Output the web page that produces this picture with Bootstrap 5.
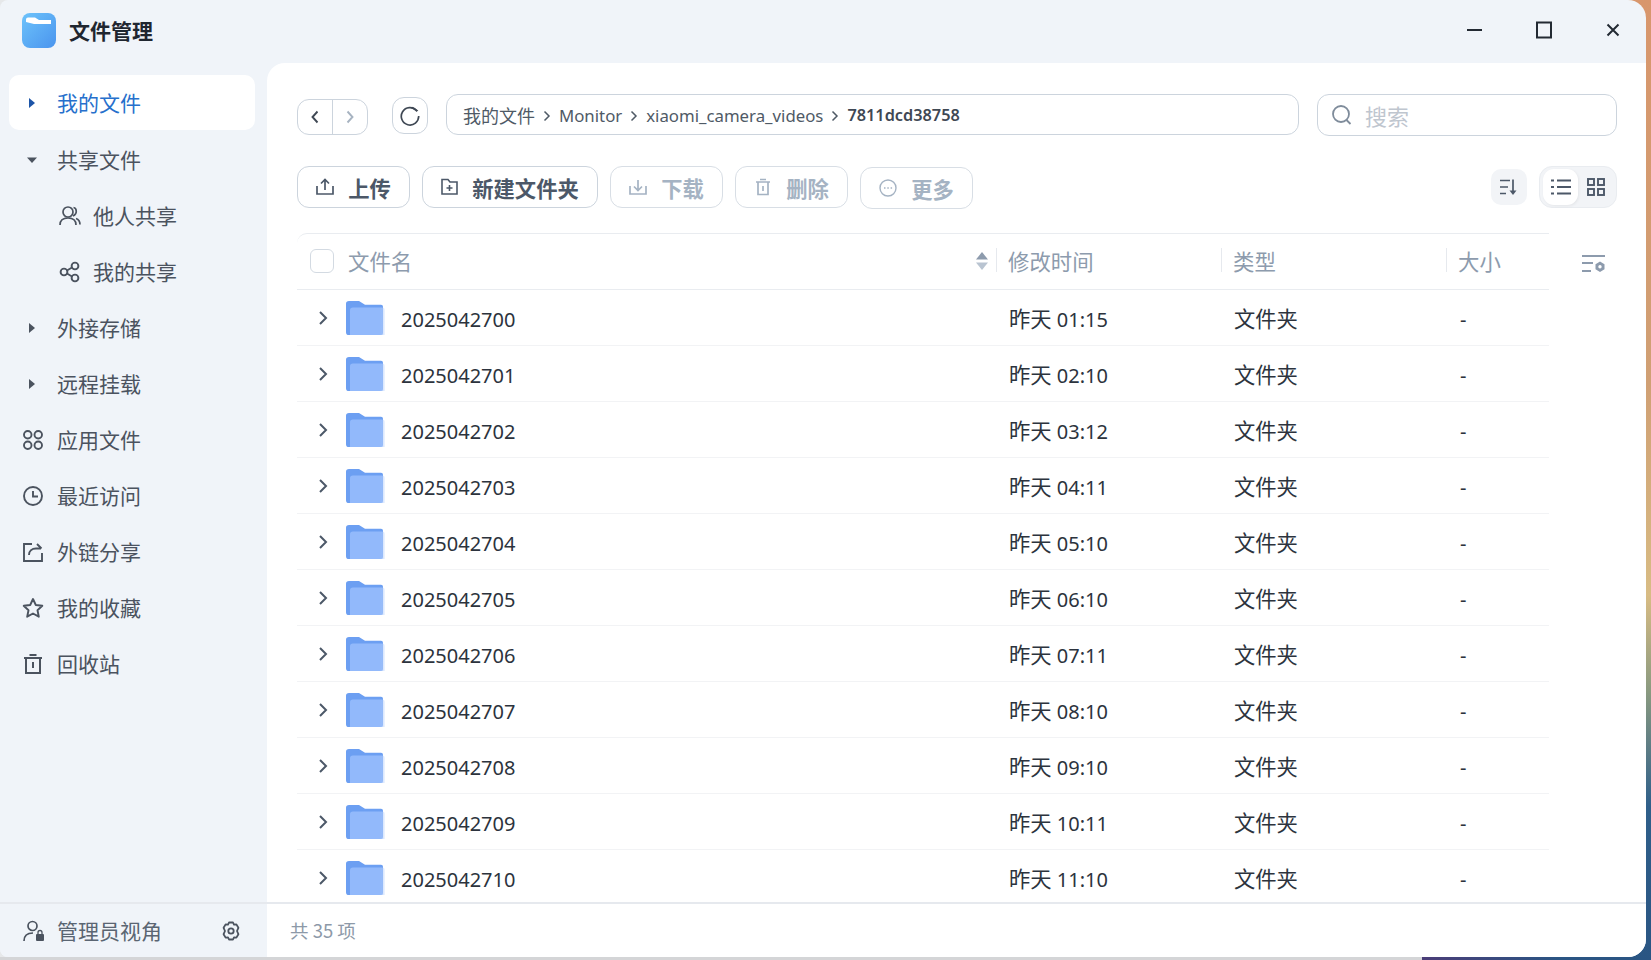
<!doctype html>
<html lang="zh">
<head>
<meta charset="utf-8">
<title>文件管理</title>
<link href="https://cdn.jsdelivr.net/npm/bootstrap@5.3.0/dist/css/bootstrap.min.css" rel="stylesheet">
<style>
html,body{height:960px;overflow:hidden}
body{font-family:"Noto Sans CJK SC","Noto Sans",sans-serif;color:#2c333d;
 background:linear-gradient(90deg,#e6e8ea 0,#e6e8ea 40px,transparent 40px),linear-gradient(180deg,#d8966c 0,#d0a074 40%,#d8bc84 62%,#8a9a80 72%,#2f5f8a 84%,#2a5583 100%)}
.shell{width:1646px;height:957px;background:#f0f4f9;border-radius:8px 18px 18px 8px;overflow:hidden}
.deskstrip{height:3px;background:linear-gradient(90deg,#d4d5d7 0,#d4d5d7 1422px,#4b3d78 1422px,#2a5583 1560px)}
.titlebar{height:63px;padding-left:22px}
.applogo{width:34px;height:35px;margin-top:-2px}
.apptitle{font-size:21px;font-weight:700;color:#1f2630;margin-left:13px;margin-top:-2px}
.winbtns{margin-bottom:8px}
.winbtn{width:69px;height:30px;background:none;border:0;padding:0 0 0 2px;color:#232a33}
.mainarea{height:839px}
.side{width:267px;padding:12px 12px 0 9px}
.sideitem{height:56px;font-size:21px;color:#4b535f;padding-left:14px;flex-shrink:0}
.sideitem.active{height:55px;background:#fff;border-radius:10px;color:#2670cc;margin-bottom:2px}
.sideitem.caretrow{padding-left:17px}
.sideitem.sub{padding-left:50px}
.sideicon{width:20px;margin-right:14px;flex-shrink:0}
.sub .sideicon{width:22px;margin-right:12px}
.sideicon.wide{width:22px;margin-left:-1px;margin-right:13px}
.caret-s{width:12px;margin-right:19px;flex-shrink:0}
.panel{background:#fff;border-top-left-radius:18px;flex:1 1 0;min-width:0;padding:31px 29px 0 30px;overflow:hidden}
.barbox{background:#fff;border:1px solid #ccd4dd}
.navpair{width:71px;height:36px;border-radius:12px;margin-top:5px}
.navpair>div{flex:1;height:100%}
.navpair>div:first-child{border-right:1px solid #ccd4dd}
.refreshb{width:36px;height:37px;border-radius:12px;margin:3px 18px 0 24px}
.crumbs{width:853px;height:41px;border-radius:12px;padding:2px 0 0 16px;font-size:16.8px;color:#4f5a66;font-family:"Noto Sans","Noto Sans CJK SC",sans-serif}
.crumbs .cjk{font-size:18px;font-family:"Noto Sans CJK SC",sans-serif}
.crumbs strong{font-weight:600;color:#3f4854;font-size:16.3px}
.crumbsep{margin:0 8px}
.searchb{width:300px;height:42px;border-radius:12px;margin-left:18px;padding-left:13px;color:#bfc6cf;font-size:22px}
.tools{margin-top:30px;height:42px}
.tbtn{height:42px;border:1px solid #ccd4dd;border-radius:12px;background:#fff;font-size:21.3px;font-weight:700;color:#4c5868;padding:2px 0 0;margin-right:12px;display:flex;align-items:center;justify-content:center}
.tbtn.off{color:#a5b3c3;border-color:#d8dee5}
.tbtn svg{margin-right:14px;margin-top:-2px}
.btn113{width:113px}
.btn176{width:176px}
.btnlow{margin-top:1px}
.sortb{width:36px;height:36px;border-radius:10px;background:#f2f4f7;margin:3px 12px 0 auto}
.viewseg{width:78px;height:42px;border-radius:13px;background:#f2f4f7;border:1px solid #e9ecf0;padding:2px 3px}
.viewseg>div{width:36px;height:36px;border-radius:11px}
.viewseg>div.on{background:#fff;box-shadow:1px 1px 3px rgba(0,0,0,.06)}
.tablewrap{margin-top:25px;width:1252px;position:relative}
.thead-row{height:57px;border-top:1px solid #e9ecf0;border-bottom:1px solid #e9ecf0;border-top-left-radius:10px;color:#8d9bad;font-size:21.4px}
.thead-row .nametitle{margin-left:1px}
.chk{width:24px;height:24px;border:1.5px solid #d3dae2;border-radius:6px;margin:0 13px;flex-shrink:0}
.colname{width:699px;flex-shrink:0}
.coltime,.coltype{width:225px;flex-shrink:0}
.colsize{flex:1}
.thead-row .coltime,.thead-row .coltype,.thead-row .colsize{padding-left:12px;position:relative}
.coldiv{position:absolute;left:0;top:3px;height:24px;width:1px;background:#e6e9ee}
.tsort{margin-right:8px}
.colgear{position:absolute;left:1285px;top:21px}
.frow{height:56px;border-bottom:1px solid #f2f3f5;font-size:20px;color:#2c333d;font-family:"Noto Sans","Noto Sans CJK SC",sans-serif}
.frow .cjk{font-size:21.3px;font-family:"Noto Sans CJK SC",sans-serif}
.frow .chev{width:13px;margin-left:20px;margin-right:16px;flex-shrink:0}
.frow .folder{width:39px;height:34px;margin-right:16px;flex-shrink:0}
.frow .coltime,.frow .coltype{padding:2px 0 0 13px}
.frow .colsize{padding:4px 0 0 14px}
.frow .colname{display:flex;align-items:center}
.frow .ftext{padding-top:5px}
.foot{height:55px;border-top:2px solid #e6e9ee;flex-shrink:0}
.footside{width:267px;padding-left:23px;font-size:21px;color:#5a6572;background:#f0f4f9}
.adminicon{margin-right:12px}
.footgear{margin-right:26px}
.footmain{flex:1;background:#fff;padding-left:23px;font-size:18.5px;color:#8d99a8}
</style>
</head>
<body>
<div class="shell d-flex flex-column">
  <div class="titlebar d-flex align-items-center">
    <svg class="applogo" viewBox="0 0 34 35"><defs><linearGradient id="lg" x1="0" y1="0" x2="1" y2="1"><stop offset="0" stop-color="#6dc3fb"/><stop offset="1" stop-color="#4a94ee"/></linearGradient></defs><rect width="34" height="35" rx="8" fill="url(#lg)"/><path d="M4 6.500a2 2 0 0 1 2-2h7l4 2.500h12v4H12L4 9z" fill="#fff"/></svg>
    <span class="apptitle">文件管理</span>
    <div class="winbtns ms-auto d-flex align-items-center">
      <button class="winbtn"><svg width="16" height="16" viewBox="0 0 16 16"><path d="M0 8h15" stroke="currentColor" stroke-width="2"/></svg></button>
      <button class="winbtn"><svg width="18" height="18" viewBox="0 0 18 18"><rect x="2" y="1.500" width="14" height="15" fill="none" stroke="currentColor" stroke-width="2"/></svg></button>
      <button class="winbtn"><svg width="14" height="14" viewBox="0 0 14 14"><path d="M1.500 1.500l11 11M12.500 1.500l-11 11" stroke="currentColor" stroke-width="2"/></svg></button>
    </div>
  </div>
  <div class="mainarea d-flex">
    <aside class="side d-flex flex-column">
      <div class="sideitem caretrow active d-flex align-items-center"><svg class="caret-s" viewBox="0 0 12 12" height="12"><path d="M3 1l6 5-6 5z" fill="#1d55a8"/></svg><span>我的文件</span></div>
      <div class="sideitem caretrow d-flex align-items-center"><svg class="caret-s" viewBox="0 0 12 12" height="12"><path d="M1 3.500h10l-5 5.500z" fill="#4b535f"/></svg><span>共享文件</span></div>
      <div class="sideitem sub d-flex align-items-center"><svg class="sideicon" viewBox="0 0 22 22" height="22"><g fill="none" stroke="#4b535f" stroke-width="1.700"><circle cx="9" cy="7" r="5"/><path d="M1 20c0-5 3.500-7 8-7s8 2 8 7M14.500 2.500c3 .5 4.500 6-.5 8.500M17 13.500c2.500 1 4 3 4 6"/></g></svg><span>他人共享</span></div>
      <div class="sideitem sub d-flex align-items-center"><svg class="sideicon" viewBox="0 0 22 22" height="22"><g fill="none" stroke="#4b535f" stroke-width="1.900"><circle cx="5" cy="11" r="3.400"/><circle cx="16" cy="5" r="3.400"/><circle cx="16" cy="17" r="3.400"/><path d="M8 9.500l5-3M8 12.500l5 3"/></g></svg><span>我的共享</span></div>
      <div class="sideitem caretrow d-flex align-items-center"><svg class="caret-s" viewBox="0 0 12 12" height="12"><path d="M3 1l6 5-6 5z" fill="#4b535f"/></svg><span>外接存储</span></div>
      <div class="sideitem caretrow d-flex align-items-center"><svg class="caret-s" viewBox="0 0 12 12" height="12"><path d="M3 1l6 5-6 5z" fill="#4b535f"/></svg><span>远程挂载</span></div>
      <div class="sideitem d-flex align-items-center"><svg class="sideicon" viewBox="0 0 20 20" height="20"><g fill="none" stroke="#4b535f" stroke-width="1.900"><rect x="1" y="1" width="7.500" height="7.500" rx="3.700"/><rect x="11.500" y="1" width="7.500" height="7.500" rx="3.700"/><rect x="1" y="11.500" width="7.500" height="7.500" rx="3.700"/><rect x="11.500" y="11.500" width="7.500" height="7.500" rx="3.700"/></g></svg><span>应用文件</span></div>
      <div class="sideitem d-flex align-items-center"><svg class="sideicon" viewBox="0 0 20 20" height="20"><g fill="none" stroke="#4b535f" stroke-width="1.900"><circle cx="10" cy="10" r="9"/><path d="M10 5v5.500h5"/></g></svg><span>最近访问</span></div>
      <div class="sideitem d-flex align-items-center"><svg class="sideicon" viewBox="0 0 20 20" height="20"><path d="M9 2H1v17h18v-8M6 13c0-4 3-6.500 7-6.500h5M14 2l4.500 4.500" fill="none" stroke="#4b535f" stroke-width="1.900"/></svg><span>外链分享</span></div>
      <div class="sideitem d-flex align-items-center"><svg class="sideicon wide" viewBox="0 0 22 22" height="22"><path d="M11 2l2.800 6 6.500.8-4.800 4.400 1.300 6.500L11 16.500l-5.800 3.200 1.300-6.500L1.700 8.800 8.200 8z" fill="none" stroke="#4b535f" stroke-width="1.900" stroke-linejoin="round"/></svg><span>我的收藏</span></div>
      <div class="sideitem d-flex align-items-center"><svg class="sideicon" viewBox="0 0 20 20" height="20"><path d="M1 4h18M6.500 1h7M3 4v15h14V4M10 8v6" fill="none" stroke="#4b535f" stroke-width="2"/></svg><span>回收站</span></div>
    </aside>
    <main class="panel d-flex flex-column">
      <div class="d-flex align-items-start">
        <div class="barbox navpair d-flex">
          <div class="d-flex align-items-center justify-content-center"><svg width="10" height="14" viewBox="0 0 10 14"><path d="M7.500 1.500l-5 5.500 5 5.500" fill="none" stroke="#3f4854" stroke-width="1.900"/></svg></div>
          <div class="d-flex align-items-center justify-content-center"><svg width="10" height="14" viewBox="0 0 10 14"><path d="M2.500 1.500l5 5.500-5 5.500" fill="none" stroke="#a7b3c1" stroke-width="1.900"/></svg></div>
        </div>
        <div class="barbox refreshb d-flex align-items-center justify-content-center"><svg width="20" height="20" viewBox="0 0 20 20"><path d="M16.500 4.500A8.700 8.700 0 1 0 18.700 10" fill="none" stroke="#3f4854" stroke-width="1.700"/><path d="M12 1.500l4.800 3-1 .7" fill="none" stroke="#3f4854" stroke-width="1.700"/></svg></div>
        <div class="barbox crumbs d-flex align-items-center"><span class="cjk">我的文件</span><svg class="crumbsep" width="8" height="12" viewBox="0 0 8 12"><path d="M1.500 1.500L6 6l-4.500 4.500" fill="none" stroke="#4f5a66" stroke-width="1.500"/></svg>Monitor<svg class="crumbsep" width="8" height="12" viewBox="0 0 8 12"><path d="M1.500 1.500L6 6l-4.500 4.500" fill="none" stroke="#4f5a66" stroke-width="1.500"/></svg>xiaomi_camera_videos<svg class="crumbsep" width="8" height="12" viewBox="0 0 8 12"><path d="M1.500 1.500L6 6l-4.500 4.500" fill="none" stroke="#4f5a66" stroke-width="1.500"/></svg><strong>7811dcd38758</strong></div>
        <div class="barbox searchb d-flex align-items-center"><svg width="22" height="22" viewBox="0 0 22 22" class="me-2"><circle cx="10" cy="10" r="8" fill="none" stroke="#7f8c9b" stroke-width="1.800"/><path d="M15.500 16l4 4" stroke="#7f8c9b" stroke-width="1.800"/></svg><span class="ms-1">搜索</span></div>
      </div>
      <div class="tools d-flex align-items-start">
        <button class="tbtn btn113"><svg width="18" height="18" viewBox="0 0 18 18"><path d="M1 8v8h16V8M9 12V2M5 5.500L9 1.500l4 4" fill="none" stroke="#4c5868" stroke-width="1.700"/></svg>上传</button>
        <button class="tbtn btn176"><svg width="17" height="18" viewBox="0 0 17 18"><path d="M1 16V1.500h6l2 2.500h7v12zM8.500 7v6M5.500 10h6" fill="none" stroke="#4c5868" stroke-width="1.600"/></svg>新建文件夹</button>
        <button class="tbtn off btn113"><svg width="18" height="18" viewBox="0 0 18 18"><path d="M1 8v8h16V8M9 2v10M5 8.500l4 4 4-4" fill="none" stroke="#a5b3c3" stroke-width="1.700"/></svg>下载</button>
        <button class="tbtn off btn113"><svg width="18" height="18" viewBox="0 0 18 18"><path d="M2 4h14M6 1.500h6M4 4v12.500h10V4M9 8v5" fill="none" stroke="#a5b3c3" stroke-width="1.700"/></svg>删除</button>
        <button class="tbtn off btn113 btnlow"><svg width="18" height="18" viewBox="0 0 18 18"><circle cx="9" cy="9" r="8" fill="none" stroke="#a5b3c3" stroke-width="1.400"/><path d="M5 9h1.500M8.300 9h1.500M11.600 9h1.500" stroke="#a5b3c3" stroke-width="1.400"/></svg>更多</button>
        <div class="sortb d-flex align-items-center justify-content-center"><svg width="20" height="18" viewBox="0 0 20 18"><path d="M1 2.500h10M1 9h8M1 15.500h6M14 1.500V13" fill="none" stroke="#4c5868" stroke-width="1.700"/><path d="M10.500 12.500h7L14 17z" fill="#4c5868"/></svg></div>
        <div class="viewseg d-flex">
          <div class="on d-flex align-items-center justify-content-center"><svg width="20" height="18" viewBox="0 0 20 18"><path d="M0 2.500h3M6 2.500h14M0 9h3M6 9h14M0 15.500h3M6 15.500h14" fill="none" stroke="#4c5868" stroke-width="2"/></svg></div>
          <div class="d-flex align-items-center justify-content-center"><svg width="18" height="18" viewBox="0 0 18 18"><g fill="none" stroke="#4c5868" stroke-width="1.900"><rect x="1" y="1" width="6" height="6"/><rect x="11" y="1" width="6" height="6"/><rect x="1" y="11" width="6" height="6"/><rect x="11" y="11" width="6" height="6"/></g></svg></div>
        </div>
      </div>
      <div class="tablewrap">
        <div class="thead-row d-flex align-items-center">
          <div class="colname d-flex align-items-center"><div class="chk"></div><span class="nametitle">文件名</span>
            <svg class="tsort ms-auto" width="12" height="20" viewBox="0 0 12 20"><path d="M6 1l6 7.500H0z" fill="#8d9bad"/><path d="M6 19l6-7.500H0z" fill="#b9c4d1"/></svg></div>
          <div class="coltime"><span class="coldiv"></span>修改时间</div>
          <div class="coltype"><span class="coldiv"></span>类型</div>
          <div class="colsize"><span class="coldiv"></span>大小</div>
          <svg class="colgear" width="24" height="20" viewBox="0 0 24 20"><path d="M0 2h23M0 9h11M0 17h9" stroke="#8d9bad" stroke-width="2" fill="none"/><path d="M18 7.500l4.500 2.700v5.100L18 18l-4.500-2.700v-5.100z" fill="#8d9bad"/><circle cx="18" cy="12.800" r="1.700" fill="#fff"/></svg>
        </div>
        <div id="rows"></div>
      </div>
    </main>
  </div>
  <div class="foot d-flex">
    <div class="footside d-flex align-items-center">
      <svg class="adminicon" width="22" height="22" viewBox="0 0 22 22"><circle cx="9.500" cy="6" r="4.500" fill="none" stroke="#4b535f" stroke-width="1.700"/><path d="M1 21c0-5 3-8 9-8" fill="none" stroke="#4b535f" stroke-width="1.700"/><rect x="13" y="14" width="8" height="7" rx="1" fill="#4b535f"/><path d="M15 14v-1.500a2 2 0 0 1 4 0V14" fill="none" stroke="#4b535f" stroke-width="1.300"/></svg>
      <span>管理员视角</span>
      <svg class="footgear ms-auto" width="20" height="20" viewBox="0 0 20 20"><path d="M8 1.500h4L13 3.700l2.400-.3 2 3.400L16 10l1.400 3.200-2 3.400-2.400-.3-1 2.200H8l-1-2.200-2.400.3-2-3.400L4 10 2.600 6.800l2-3.400 2.400.3z" fill="none" stroke="#4b535f" stroke-width="1.800" stroke-linejoin="round"/><circle cx="10" cy="10" r="2.700" fill="none" stroke="#4b535f" stroke-width="1.800"/></svg>
    </div>
    <div class="footmain d-flex align-items-center">共 35 项</div>
  </div>
</div>
<div class="deskstrip"></div>
<script>
var times=["01:15","02:10","03:12","04:11","05:10","06:10","07:11","08:10","09:10","10:11","11:10"],h="";
times.forEach(function(t,i){var n="20250427"+(i<10?"0":"")+i;
h+='<div class="frow d-flex align-items-center"><div class="colname"><svg class="chev" height="16" viewBox="0 0 13 16"><path d="M3 2l6 6-6 6" fill="none" stroke="#4c5868" stroke-width="2"/></svg><svg class="folder" viewBox="0 0 39 36" preserveAspectRatio="none"><defs><linearGradient id="fg'+i+'" x1="0" x2="1" y1="0" y2="0"><stop offset=".85" stop-color="#92b9fb"/><stop offset="1" stop-color="#c9dcfd" stop-opacity=".3"/></linearGradient></defs><path d="M0 3a3 3 0 0 1 3-3h10l6 4h16a2 2 0 0 1 2 2v28a2 2 0 0 1-2 2H3a3 3 0 0 1-3-3z" fill="#6c9ff2"/><path d="M4 10a3 3 0 0 1 3-3h29a3 3 0 0 1 3 3v26H4z" fill="url(#fg'+i+')"/></svg><span class="ftext">'+n+'</span></div><div class="coltime"><span class="cjk">昨天</span> '+t+'</div><div class="coltype"><span class="cjk">文件夹</span></div><div class="colsize">-</div></div>';});
document.getElementById("rows").innerHTML=h;
</script>
<script src="https://cdn.jsdelivr.net/npm/bootstrap@5.3.0/dist/js/bootstrap.bundle.min.js"></script>
</body>
</html>
